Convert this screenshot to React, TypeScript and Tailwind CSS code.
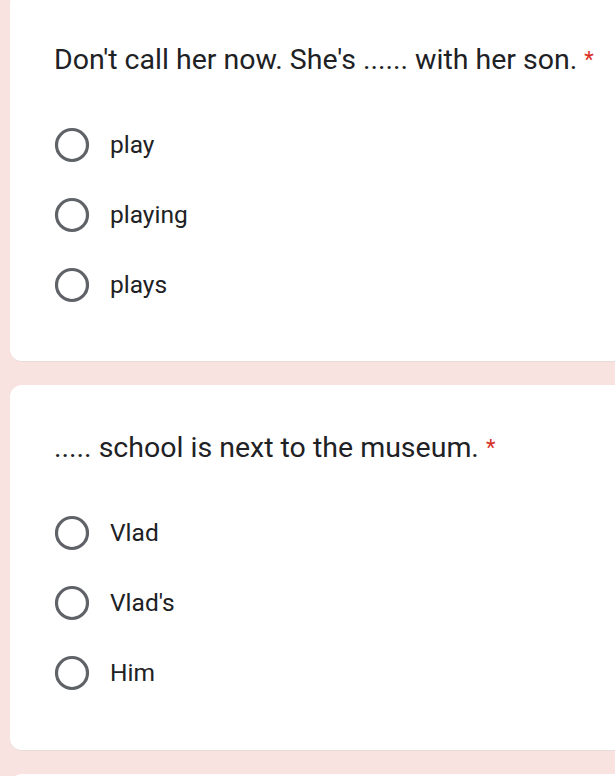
const QUESTIONS: { title: string; options: string[] }[] = [
  { title: "Don't call her now. She's ...... with her son.", options: ['play', 'playing', 'plays'] },
  { title: '..... school is next to the museum.', options: ['Vlad', "Vlad's", 'Him'] }
];

function Radio() {
  return (
    <svg width="36" height="36" viewBox="0 0 36 36" className="shrink-0">
      <circle cx="18" cy="18" r="15.5" fill="none" stroke="#5f6368" strokeWidth="3.2" />
    </svg>
  );
}

export default function App() {
  return (
    <div
      className="w-[615px] h-[776px] overflow-hidden bg-[#f8e3e0] pl-[10px] flex flex-col gap-[23px]"
      style={{ fontFamily: 'Roboto, "Liberation Sans", sans-serif' }}
    >
      {QUESTIONS.map((q, i) => (
        <div
          key={i}
          className={`bg-white rounded-l-[12px] border-b border-[#e8dcd9] shrink-0 pl-[44px] ${
            i === 0 ? '-mt-[8px] pt-[50px] h-[370px]' : 'pt-[45px] h-[366px]'
          }`}
        >
          <div className="text-[28.5px] leading-[36px] text-[#202124] whitespace-nowrap">
            {q.title}
            <span className="text-[#d93025] text-[22px] ml-[7px] align-top">*</span>
          </div>
          <div className="mt-[49px] flex flex-col gap-[34px]">
            {q.options.map((o) => (
              <div key={o} className="flex items-center gap-[20px] h-[36px]">
                <Radio />
                <span className="text-[24.5px] text-[#202124]">{o}</span>
              </div>
            ))}
          </div>
        </div>
      ))}
      <div className="bg-white rounded-l-[12px] h-[40px] shrink-0" />
    </div>
  );
}
